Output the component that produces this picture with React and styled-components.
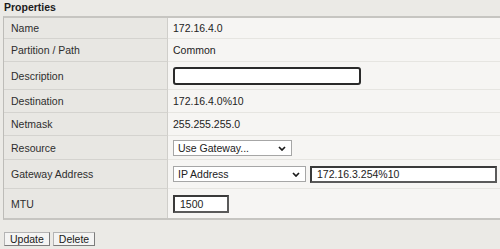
import React from "react";
import styled, { createGlobalStyle } from "styled-components";

const Global = createGlobalStyle`
  html, body {
    margin: 0;
    padding: 0;
    background: #ebeae6;
  }
  body {
    font-family: "Liberation Sans", Arial, sans-serif;
    font-size: 10.5px;
    color: #222;
  }
`;

const Page = styled.div`
  width: 500px;
  height: 249px;
  overflow: hidden;
`;

const Title = styled.div`
  height: 16px;
  line-height: 15px;
  padding-left: 4px;
  font-weight: bold;
  color: #1b1b1b;
`;

const Table = styled.div`
  margin-left: 3px;
  border-top: 2px solid #c6c5c1;
  border-bottom: 2px solid #c6c5c1;
  border-left: 1px solid #bdbcb8;
`;

const Row = styled.div`
  display: flex;
  height: ${props => props.h}px;
`;

const Label = styled.div`
  box-sizing: border-box;
  width: 164px;
  flex: none;
  display: flex;
  align-items: center;
  padding-left: 7px;
  background: #e8e7e3;
  color: #2e2e2e;
  border-right: 1px solid #cfceca;
  border-bottom: ${props => (props.last ? "none" : "1px solid #d4d3cf")};
`;

const Value = styled.div`
  box-sizing: border-box;
  flex: 1;
  display: flex;
  align-items: center;
  gap: 4px;
  padding-left: 5px;
  background: #f6f5f3;
  color: #222;
  border-bottom: ${props => (props.last ? "none" : "1px solid #e6e5e1")};
`;

const TextBox = styled.input`
  box-sizing: border-box;
  width: ${props => props.w}px;
  height: ${props => props.h || 18}px;
  margin: 0;
  padding: 0 0 0 5px;
  font: inherit;
  color: #222;
  background: #fff;
  border: 2px solid;
  border-color: #3a3a3a #5a5a5a #5a5a5a #3a3a3a;
  outline: none;
`;

const RoundBox = styled(TextBox)`
  border-color: #2a2a2a;
  border-radius: 3px;
`;

const SelectWrap = styled.div`
  position: relative;
  width: ${props => props.w}px;
  height: 16px;
  flex: none;
`;

const Select = styled.select`
  box-sizing: border-box;
  appearance: none;
  width: 100%;
  height: 100%;
  margin: 0;
  padding: 0 0 0 4px;
  font: inherit;
  color: #222;
  background: #fff;
  border: 1px solid #a6a6a6;
  border-radius: 0;
  outline: none;
`;

const Chevron = styled.svg`
  position: absolute;
  right: 6px;
  top: 6px;
  pointer-events: none;
`;

const Buttons = styled.div`
  display: flex;
  gap: 3px;
  margin: 12px 0 0 4px;
`;

const Button = styled.button`
  height: 14px;
  margin: 0;
  padding: 0 5px;
  font: inherit;
  line-height: 12px;
  color: #1a1a1a;
  background: #f4f4f3;
  border: 1px solid;
  border-color: #b4b4b4 #7c7c7c #7c7c7c #b4b4b4;
  border-radius: 0;
`;

const Arrow = () => (
  <Chevron width="8" height="5" viewBox="0 0 8 5">
    <path d="M1 1 L4 4 L7 1" fill="none" stroke="#1a1a1a" strokeWidth="1.7" />
  </Chevron>
);

const Dropdown = ({ w, value }) => (
  <SelectWrap w={w}>
    <Select defaultValue={value}>
      <option>{value}</option>
    </Select>
    <Arrow />
  </SelectWrap>
);

const rows = [
  { label: "Name", h: 21, value: "172.16.4.0" },
  { label: "Partition / Path", h: 23, value: "Common" },
  { label: "Description", h: 28, value: <RoundBox w={188} h={18} defaultValue="" /> },
  { label: "Destination", h: 23, value: "172.16.4.0%10" },
  { label: "Netmask", h: 23, value: "255.255.255.0" },
  { label: "Resource", h: 24, value: <Dropdown w={119} value="Use Gateway..." /> },
  {
    label: "Gateway Address",
    h: 29,
    value: (
      <>
        <Dropdown w={133} value="IP Address" />
        <TextBox w={187} h={17} defaultValue="172.16.3.254%10" />
      </>
    ),
  },
  { label: "MTU", h: 29, value: <TextBox w={56} h={18} defaultValue="1500" /> },
];

const App = () => {
  return (
    <Page>
      <Global />
      <Title>Properties</Title>
      <Table>
        {rows.map((row, idx) => {
          const last = idx === rows.length - 1;
          return (
            <Row key={row.label} h={row.h}>
              <Label last={last}>{row.label}</Label>
              <Value last={last}>{row.value}</Value>
            </Row>
          );
        })}
      </Table>
      <Buttons>
        <Button>Update</Button>
        <Button>Delete</Button>
      </Buttons>
    </Page>
  );
};

export default App;
